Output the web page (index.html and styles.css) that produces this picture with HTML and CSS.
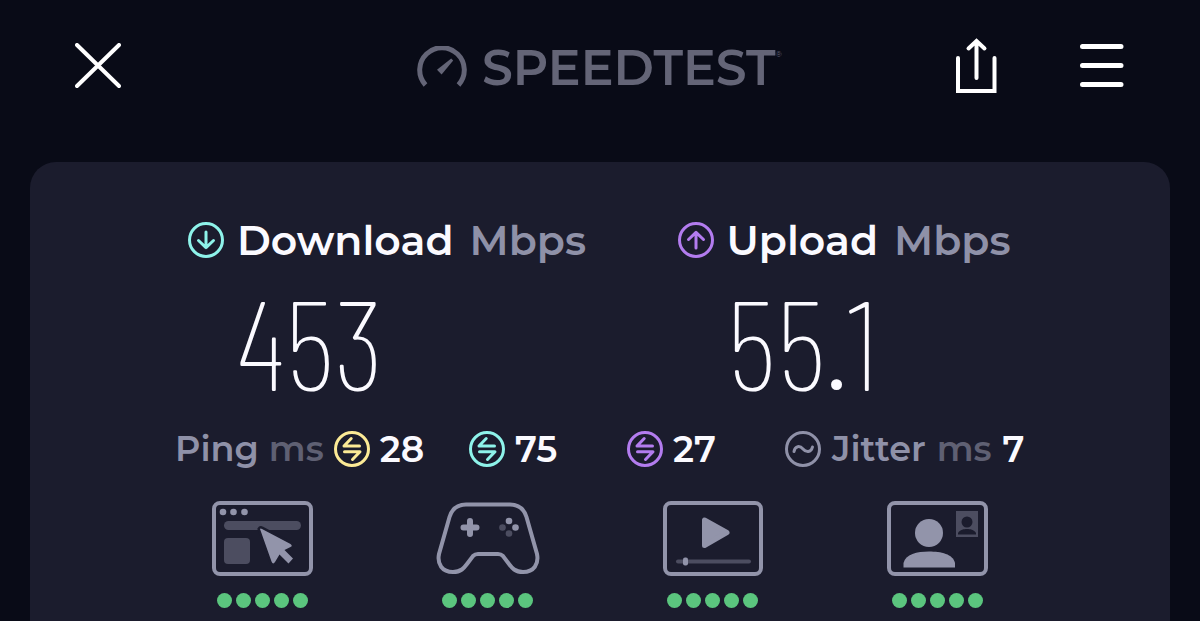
FILE: index.html
```
<!DOCTYPE html>
<html lang="en">
<head>
<meta charset="utf-8">
<meta name="viewport" content="width=device-width, initial-scale=1">
<title>Speedtest</title>
<link rel="stylesheet" href="styles.css">
</head>
<body>
<svg class="defs" aria-hidden="true">
  <symbol id="swap" viewBox="0 0 36 36">
    <circle cx="18" cy="18" r="16.5"/>
    <path d="M25.500 15H10L17.200 7.500M10.500 20.800H26L18.500 28.500"/>
  </symbol>
</svg>
<header class="topbar">
  <button class="icon-button" type="button" aria-label="Close">
    <svg width="46" height="46" viewBox="0 0 46 46"><path d="M2 2L44 43M44 2L2 43"/></svg>
  </button>
  <div class="brand">
    <svg width="50" height="44" viewBox="0 0 50 44">
      <path class="dial" d="M8.500 39A22.300 22.300 0 1 1 41.500 39"/>
      <path class="needle" d="M34.200 12.600L36.200 14.600L24.600 28.400L20 23.800Z"/>
    </svg>
    <span class="brand-name">SPEEDTEST</span><span class="brand-mark">®</span>
  </div>
  <div class="actions">
    <button class="icon-button" type="button" aria-label="Share">
      <svg width="42" height="56" viewBox="0 0 42 56"><path d="M2 20V53H38.500V20M20.500 40V3.500M12.500 10.500L20.500 3L28.500 10.500"/></svg>
    </button>
    <button class="icon-button" type="button" aria-label="Menu">
      <svg width="44" height="46" viewBox="0 0 44 46"><path class="bars" d="M2.500 3.500H41M2.500 22.500H41M2.500 41.500H41"/></svg>
    </button>
  </div>
</header>
<main class="card">
  <section class="speeds">
    <div class="speed">
      <h2 class="speed-title">
        <svg class="ring teal" viewBox="0 0 36 36"><circle cx="18" cy="18" r="16.500"/><path d="M18 10V25.500M10.500 18.500L18 25.700L25.500 18.500"/></svg>
        <span>Download</span><span class="unit">Mbps</span>
      </h2>
      <p class="speed-value">453</p>
    </div>
    <div class="speed">
      <h2 class="speed-title">
        <svg class="ring purple" viewBox="0 0 36 36"><circle cx="18" cy="18" r="16.500"/><path d="M18 26V10.500M10.500 17.500L18 10.300L25.500 17.500"/></svg>
        <span>Upload</span><span class="unit">Mbps</span>
      </h2>
      <p class="speed-value">55.1</p>
    </div>
  </section>
  <section class="latency">
    <div class="metric"><span class="label">Ping</span><span class="ms">ms</span><svg class="ring yellow"><use href="#swap"/></svg><span>28</span></div>
    <div class="metric"><svg class="ring teal"><use href="#swap"/></svg><span>75</span></div>
    <div class="metric"><svg class="ring purple"><use href="#swap"/></svg><span>27</span></div>
    <div class="metric jitter"><svg class="ring gray" viewBox="0 0 36 36"><circle cx="18" cy="18" r="16.500"/><path d="M9 20.500C10 14.500 15 14.500 18 18S26 22 27.500 16"/></svg><span class="label">Jitter</span><span class="ms">ms</span><span>7</span></div>
  </section>
  <section class="ratings">
    <div class="rating">
      <svg class="picture" viewBox="0 0 104 76" role="img" aria-label="Browsing">
        <rect class="line" x="3" y="3" width="97" height="71" rx="6"/>
        <g class="light"><circle cx="12" cy="12" r="3.300"/><circle cx="22.500" cy="12" r="3.300"/><circle cx="33.500" cy="12" r="3.300"/></g>
        <rect class="dim" x="13" y="21" width="77" height="9" rx="4.500"/>
        <rect class="dim" x="13" y="38" width="26" height="26" rx="4"/>
        <path class="pointer" d="M49 29Q49.500 28 51 29L79.500 44Q82 46 79.500 47L73.500 50L82 58.500L77.500 63.500L68.500 54.500L64 62Q62 65 60.500 61.500Z"/>
      </svg>
      <div class="dots"><i></i><i></i><i></i><i></i><i></i></div>
    </div>
    <div class="rating">
      <svg class="picture" viewBox="0 0 104 76" role="img" aria-label="Gaming">
        <path class="line" d="M30 4.500H74C83 4.500 88 9 90.500 17L101 54C103 64 98 72 87 72C79 72 76 68 73 64L67 56Q65 54 62 54H42Q39 54 37 56L31 64C28 68 25 72 17 72C6 72 1 64 3 54L13.500 17C16 9 21 4.500 30 4.500Z"/>
        <path class="pad" d="M34 21V34M27.500 27.500H40.500"/>
        <g class="light"><circle cx="73" cy="21" r="3.300"/><circle cx="79.500" cy="27.500" r="3.300"/></g>
        <g class="dim"><circle cx="66.500" cy="27.500" r="3.300"/><circle cx="73" cy="33.500" r="3.300"/></g>
      </svg>
      <div class="dots"><i></i><i></i><i></i><i></i><i></i></div>
    </div>
    <div class="rating">
      <svg class="picture" viewBox="0 0 104 76" role="img" aria-label="Streaming">
        <rect class="line" x="4" y="3" width="96" height="71" rx="6"/>
        <path class="play" d="M43.500 20V45.500L66 32.500Z"/>
        <rect class="dim" x="15" y="59.500" width="75" height="4" rx="2"/>
        <rect class="light" x="22" y="57.500" width="5" height="8" rx="2"/>
      </svg>
      <div class="dots"><i></i><i></i><i></i><i></i><i></i></div>
    </div>
    <div class="rating">
      <svg class="picture" viewBox="0 0 104 76" role="img" aria-label="Video chat">
        <rect class="line" x="3" y="3" width="97" height="71" rx="6"/>
        <circle class="light" cx="43" cy="33" r="14"/>
        <path class="light" d="M17.500 67.500V63C19.500 54 31 51.500 43 51.500S67 54 69 63V67.500Z"/>
        <rect class="dim" x="70" y="11" width="22" height="26"/>
        <circle class="cut" cx="81" cy="22" r="5.500"/>
        <path class="cut" d="M72 34.500V33C74 29.500 78 29 81 29S88 29.500 90 33V34.500Z"/>
      </svg>
      <div class="dots"><i></i><i></i><i></i><i></i><i></i></div>
    </div>
  </section>
</main>
</body>
</html>
```
FILE: styles.css
```
* { box-sizing: border-box; }
body {
  margin: 0;
  min-height: 100vh;
  display: flex;
  flex-direction: column;
  background: #090b17;
  color: #fbfaff;
  font-family: Montserrat, Inter, "Liberation Sans", sans-serif;
}
svg { display: block; flex: none; fill: none; stroke-linecap: round; }
.defs { width: 0; height: 0; position: absolute; }
.topbar {
  display: grid;
  grid-template-columns: 1fr auto 1fr;
  align-items: center;
  padding: 36px 76px 66px 75px;
}
.icon-button {
  padding: 0;
  border: 0;
  background: none;
  color: #fff;
  justify-self: start;
  cursor: pointer;
}
.icon-button svg { stroke: currentColor; stroke-width: 4; }
.icon-button .bars { stroke-width: 5; }
.brand { display: flex; align-items: center; height: 60px; padding-top: 3px; color: #646577; }
.brand-name { margin-left: 15px; font-size: 49px; font-weight: 600; line-height: 62px; }
.brand-mark { align-self: flex-start; padding-top: 11px; font-size: 8px; line-height: 8px; }
.dial { stroke: currentColor; stroke-width: 5; stroke-linecap: butt; }
.needle { fill: currentColor; }
.actions { display: flex; justify-content: flex-end; align-items: center; gap: 82px; }
.card {
  flex: 1;
  margin: 0 30px;
  padding-top: 50px;
  border-radius: 26px 26px 0 0;
  background: #1b1c2d;
}
.speeds { display: grid; grid-template-columns: 1fr 1fr; padding: 0 3px 0 158px; }
.speed-title {
  display: flex;
  align-items: center;
  gap: 13px;
  margin: 0;
  font-size: 41px;
  font-weight: 600;
  line-height: 56px;
}
.unit { margin-left: 3px; color: #8f91a8; }
.speed-value {
  margin: 14px 0 6px;
  padding-left: 49px;
  font-family: "Barlow Condensed", "Roboto Condensed", Roboto, sans-serif;
  font-size: 127px;
  font-weight: 200;
  line-height: 116px;
}
.ring { width: 36px; height: 36px; stroke: currentColor; stroke-width: 3; stroke-linejoin: round; }
.teal { color: #8ef3ea; }
.purple { color: #b37cef; }
.yellow { color: #fcea96; }
.gray { color: #8f91a8; }
.latency {
  display: grid;
  grid-template-columns: 294fr 158fr 158fr 241fr;
  padding: 20px 144px 0 145px;
  font-size: 36px;
  font-weight: 600;
  line-height: 50px;
}
.metric { display: flex; align-items: center; gap: 10px; white-space: nowrap; }
.jitter { gap: 11px; }
.label { color: #8f91a8; font-size: 35px; }
.ms { color: #5f6073; font-size: 35px; }
.ratings { display: grid; grid-template-columns: repeat(4, 1fr); padding: 26px 120px 12px; }
.rating { display: flex; flex-direction: column; align-items: center; gap: 17px; }
.picture { width: 104px; height: 76px; }
.line { stroke: #9294aa; stroke-width: 4; }
.light { fill: #9294aa; }
.dim { fill: #4c4d60; }
.cut { fill: #1b1c2d; }
.pointer { fill: #9294aa; stroke: #1b1c2d; stroke-width: 5; paint-order: stroke; }
.pad { stroke: #9294aa; stroke-width: 6; }
.play { fill: #9294aa; stroke: #9294aa; stroke-width: 5; stroke-linejoin: round; }
.dots { display: flex; gap: 4px; }
.dots i { width: 15px; height: 15px; border-radius: 50%; background: #5bc57e; }
```
